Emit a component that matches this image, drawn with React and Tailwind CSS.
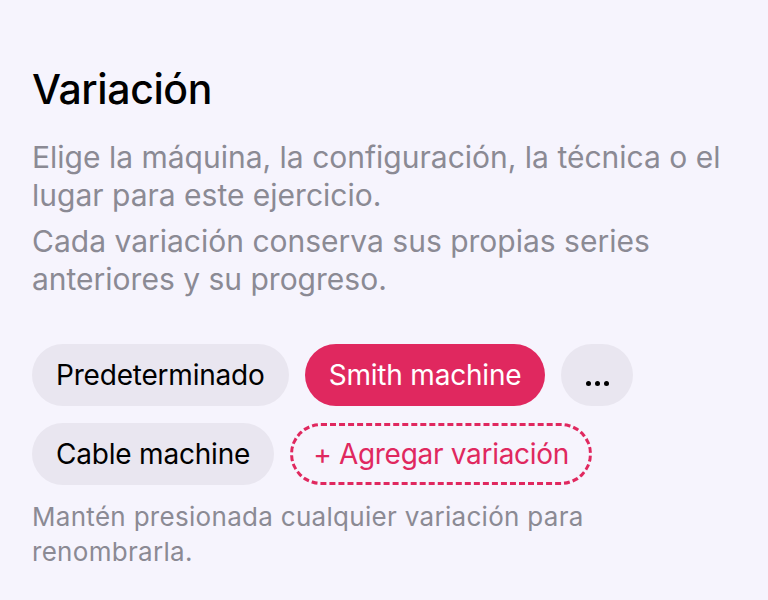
import React from "react";

const VARIATIONS = [
  { label: "Predeterminado", active: false },
  { label: "Smith machine", active: true },
  { label: "...", active: false, more: true },
  { label: "Cable machine", active: false },
];

export default function App() {
  return (
    <div
      className="min-h-[600px] w-full bg-[#f6f4fd] px-8 pt-[62px]"
      style={{ fontFamily: "Inter, 'Noto Sans', sans-serif" }}
    >
      <h1 className="text-[41px] font-medium leading-[54px] tracking-[-0.4px] text-black">
        Variación
      </h1>

      <p className="mt-[22px] text-[30px] leading-[38px] text-[#8b8a94]">
        Elige la máquina, la configuración, la técnica o el lugar para este
        ejercicio.
      </p>
      <p className="mt-2 text-[30px] leading-[38px] text-[#8b8a94]">
        Cada variación conserva sus propias series anteriores y su progreso.
      </p>

      <div className="mt-[46px] flex flex-wrap gap-x-4 gap-y-[17px]">
        {VARIATIONS.map((v, i) =>
          v.more ? (
            <button
              key={i}
              aria-label="Más"
              className="flex h-[62px] w-[72px] items-center justify-center gap-[4px] rounded-full bg-[#e9e6f0] pt-4"
            >
              <span className="h-[5px] w-[5px] rounded-full bg-black" />
              <span className="h-[5px] w-[5px] rounded-full bg-black" />
              <span className="h-[5px] w-[5px] rounded-full bg-black" />
            </button>
          ) : (
            <button
              key={i}
              className={`flex h-[62px] items-center rounded-full px-6 text-[28px] tracking-[-0.2px] ${
                v.active
                  ? "bg-[#e0285f] text-white"
                  : "bg-[#e9e6f0] text-black"
              }`}
            >
              {v.label}
            </button>
          )
        )}
        <button className="flex h-[62px] items-center rounded-full border-[3px] border-dashed border-[#e0285f] px-[20px] text-[28px] tracking-[-0.3px] text-[#e0285f]">
          + Agregar variación
        </button>
      </div>

      <p className="mt-[14px] text-[26px] leading-[35px] tracking-[0.3px] text-[#8b8a94]">
        Mantén presionada cualquier variación para renombrarla.
      </p>
    </div>
  );
}
